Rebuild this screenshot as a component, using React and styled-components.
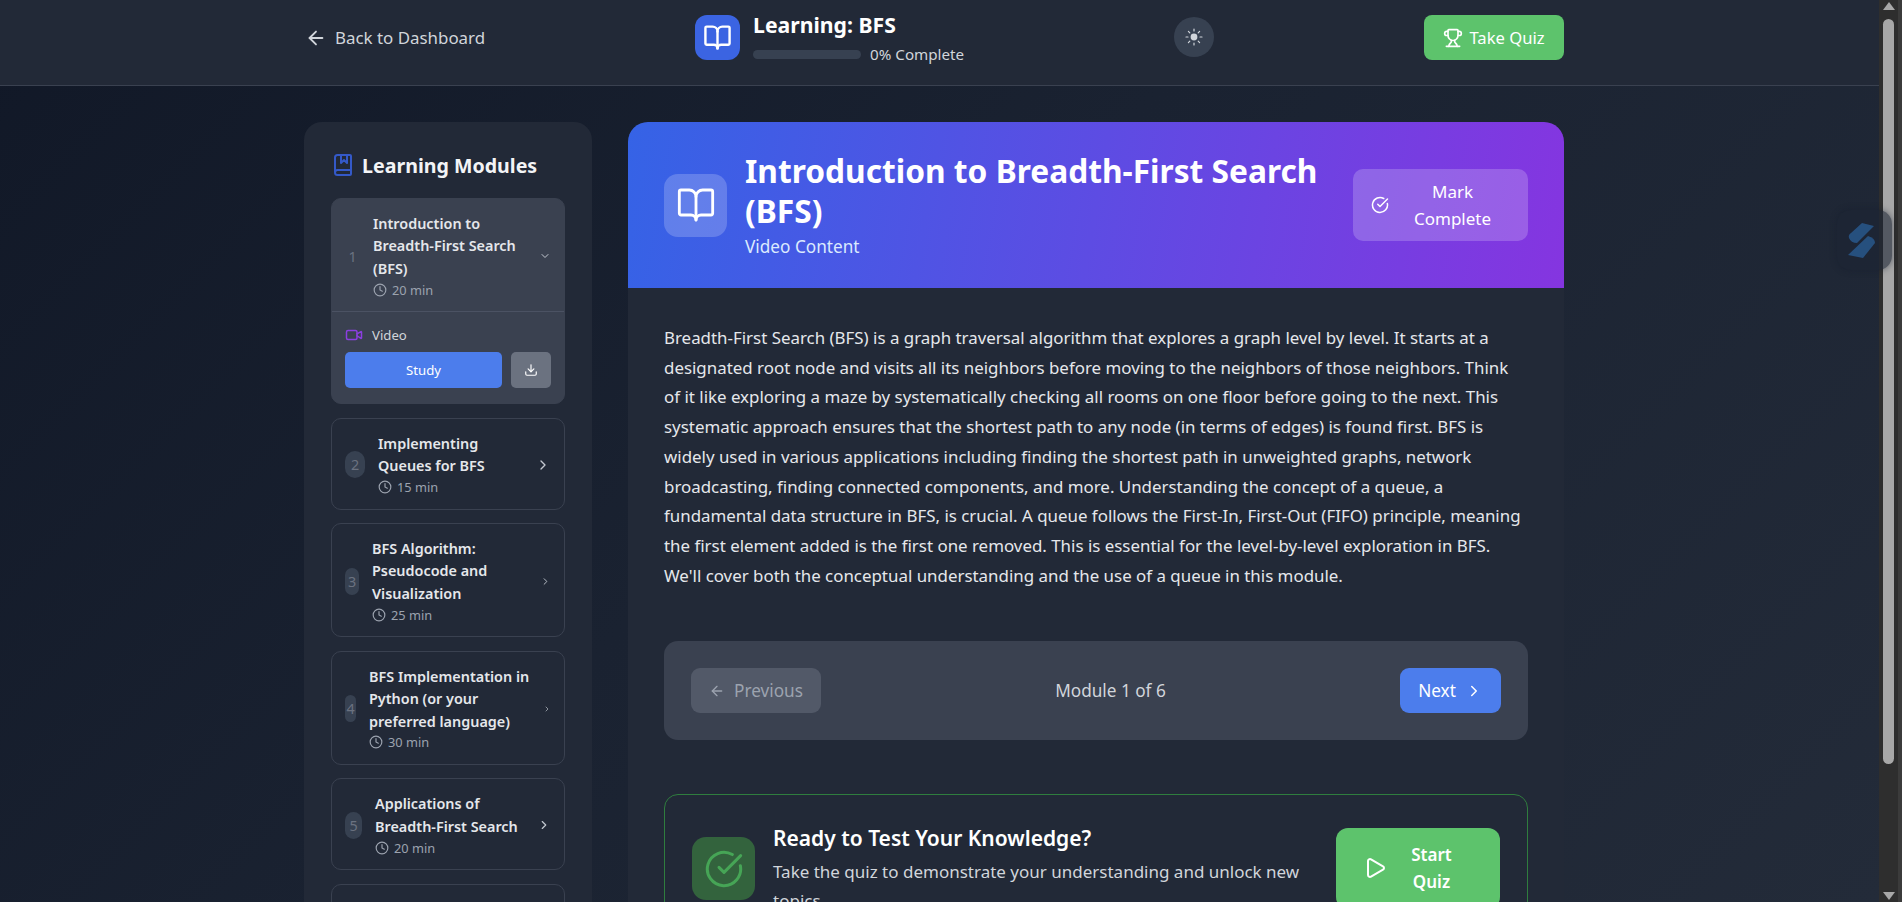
import React from 'react';
import styled, { createGlobalStyle } from 'styled-components';
import {
  ArrowLeft, BookMarked, BookOpen, ChevronDown, ChevronRight, CircleCheckBig,
  Clock, Download, Play, Trophy, Video,
} from 'lucide-react';

const GlobalStyle = createGlobalStyle`
  html, body { margin: 0; padding: 0; height: 100%; overflow: hidden; }
  body { font-family: "Noto Sans", "Open Sans", sans-serif; color: #fff; background: #111827; }
  * { box-sizing: border-box; }
  button { font-family: inherit; border: 0; cursor: pointer; }
`;

const Shell = styled.div`
  position: relative;
  display: flex;
  height: 100vh;
  overflow: hidden;
`;

const Page = styled.div`
  flex: 1;
  min-width: 0;
  overflow: hidden;
  background: linear-gradient(135deg, #111827 0%, #1a2231 45%, #232b39 100%);
`;

const Header = styled.header`
  height: 86px;
  padding: 15px 315px 0 305px;
  background: #222937;
  border-bottom: 1px solid #3a4150;
  display: flex;
  align-items: flex-start;
  justify-content: space-between;
`;

const BackLink = styled.a`
  display: flex;
  align-items: center;
  gap: 8px;
  height: 45px;
  font-size: 16.9px;
  color: #d1d5db;
`;

const Brand = styled.div`
  display: flex;
  gap: 13px;
`;

const BrandTile = styled.div`
  width: 45px;
  height: 45px;
  border-radius: 12px;
  background: #3b64e2;
  display: flex;
  align-items: center;
  justify-content: center;
`;

const BrandTitle = styled.div`
  font-size: 21.2px;
  font-weight: 700;
  line-height: 24px;
  margin-top: -2px;
`;

const ProgressRow = styled.div`
  display: flex;
  align-items: center;
  gap: 9px;
  margin-top: 7px;
  font-size: 15.2px;
  line-height: 20px;
  color: #d1d5db;
`;

const ProgressTrack = styled.div`
  width: 108px;
  height: 9px;
  border-radius: 5px;
  background: #374151;
`;

const ThemeButton = styled.button`
  width: 40px;
  height: 40px;
  margin-top: 2px;
  border-radius: 50%;
  background: #374151;
  display: flex;
  align-items: center;
  justify-content: center;
`;

const QuizButton = styled.button`
  width: 140px;
  height: 45px;
  border-radius: 8px;
  background: #5dc36c;
  color: #fff;
  font-size: 16.6px;
  display: flex;
  align-items: center;
  justify-content: center;
  gap: 6px;
`;

const Layout = styled.main`
  display: grid;
  grid-template-columns: 288px 936px;
  gap: 36px;
  padding: 36px 0 0 304px;
`;

const Sidebar = styled.aside`
  background: #222937;
  border-radius: 18px;
  padding: 26px 27px 27px;
`;

const SidebarTitle = styled.h2`
  display: flex;
  align-items: center;
  gap: 7px;
  margin: 0 0 16px;
  height: 34px;
  font-size: 19.6px;
  font-weight: 700;
  color: #f3f4f6;
`;

const ModuleList = styled.div`
  display: flex;
  flex-direction: column;
  gap: 13.5px;
`;

const ModuleCard = styled.div`
  border-radius: 10px;
  border: 1px solid #3a4150;
  background: ${p => (p.$active ? '#3a4150' : 'transparent')};
`;

const ModuleStub = styled(ModuleCard)`
  height: 92px;
`;

const ModuleHead = styled.div`
  display: flex;
  align-items: center;
  gap: 13px;
  padding: 14px 13px 12px;
`;

const Badge = styled.span`
  flex: none;
  width: ${p => p.$w}px;
  height: 27px;
  border-radius: 10px;
  background: ${p => (p.$active ? 'transparent' : '#374151')};
  color: #6b7280;
  font-size: 14.4px;
  display: flex;
  align-items: center;
  justify-content: center;
`;

const ModuleBody = styled.div`
  flex: 1;
  min-width: 0;
`;

const ModuleTitle = styled.div`
  font-size: 14.4px;
  font-weight: 600;
  line-height: 22.4px;
  color: #e5e7eb;
`;

const ModuleTime = styled.div`
  display: flex;
  align-items: center;
  gap: 5px;
  height: 19px;
  font-size: 12.8px;
  color: #9ca3af;
`;

const ChevronSlot = styled.span`
  flex: none;
  display: flex;
  color: #c3c8d0;
`;

const ModuleFoot = styled.div`
  border-top: 1px solid #4b5263;
  padding: 13px 13px 15px;
`;

const FootLabel = styled.div`
  display: flex;
  align-items: center;
  gap: 9px;
  height: 20px;
  font-size: 13.2px;
  color: #d1d5db;
`;

const FootActions = styled.div`
  display: flex;
  gap: 9px;
  margin-top: 7px;
`;

const StudyButton = styled.button`
  flex: 1;
  height: 36px;
  border-radius: 5px;
  background: #4c7dec;
  color: #fff;
  font-size: 13.2px;
`;

const DownloadButton = styled.button`
  width: 40px;
  height: 36px;
  border-radius: 5px;
  background: #6b7280;
  color: #fff;
  display: flex;
  align-items: center;
  justify-content: center;
`;

const Content = styled.section`
  background: #222937;
  border-radius: 20px 20px 0 0;
  min-height: 900px;
`;

const Hero = styled.div`
  height: 166px;
  border-radius: 20px 20px 0 0;
  padding: 0 36px;
  background: linear-gradient(100deg, #3563e6 0%, #8535e0 100%);
  display: flex;
  align-items: center;
  gap: 18px;
`;

const HeroTile = styled.div`
  flex: none;
  width: 63px;
  height: 63px;
  border-radius: 14px;
  background: rgba(255, 255, 255, 0.2);
  display: flex;
  align-items: center;
  justify-content: center;
`;

const HeroText = styled.div`
  flex: 1;
  min-width: 0;
`;

const HeroTitle = styled.h1`
  margin: 0;
  font-size: 31.7px;
  font-weight: 700;
  line-height: 40px;
`;

const HeroSub = styled.div`
  margin-top: 2px;
  font-size: 17.2px;
  line-height: 27px;
  color: #dbeafe;
`;

const MarkButton = styled.button`
  flex: none;
  width: 175px;
  height: 72px;
  border-radius: 10px;
  background: rgba(255, 255, 255, 0.2);
  color: #fff;
  font-size: 17px;
  line-height: 27px;
  padding: 0 18px;
  display: flex;
  align-items: center;
  gap: 6px;
`;

const ButtonLabel = styled.span`
  flex: 1;
  text-align: center;
`;

const Article = styled.div`
  padding: 35px 36px 0;
`;

const Paragraph = styled.p`
  margin: 0;
  font-size: 16.9px;
  line-height: 29.7px;
  color: #e5e7eb;
`;

const ParagraphLine = styled.span`
  display: block;
  white-space: nowrap;
`;

const Pager = styled.nav`
  margin-top: 51px;
  padding: 27px;
  border-radius: 14px;
  background: #3a4150;
  display: flex;
  align-items: center;
  justify-content: space-between;
`;

const PagerButton = styled.button`
  height: 45px;
  width: ${p => p.$w}px;
  border-radius: 9px;
  background: ${p => (p.$primary ? '#4c7dec' : '#525968')};
  color: ${p => (p.$primary ? '#fff' : '#9ca3af')};
  font-size: 17.2px;
  display: flex;
  align-items: center;
  justify-content: center;
  gap: 9px;
`;

const PagerLabel = styled.div`
  font-size: 17.2px;
  color: #d1d5db;
`;

const QuizPanel = styled.div`
  margin-top: 54px;
  padding: 27px;
  border: 1px solid #2f7d3e;
  border-radius: 14px;
  display: flex;
  align-items: center;
  gap: 18px;
`;

const QuizTile = styled.div`
  flex: none;
  width: 63px;
  height: 63px;
  border-radius: 14px;
  background: #33633d;
  display: flex;
  align-items: center;
  justify-content: center;
`;

const QuizText = styled.div`
  flex: 1;
  min-width: 0;
`;

const QuizTitle = styled.h3`
  margin: 0;
  font-size: 21px;
  font-weight: 600;
  line-height: 33px;
`;

const QuizDesc = styled.p`
  margin: 2px 0 0;
  font-size: 17px;
  line-height: 29px;
  color: #d1d5db;
`;

const StartButton = styled.button`
  flex: none;
  width: 164px;
  height: 81px;
  margin-top: -1px;
  border-radius: 12px;
  background: #5dc36c;
  color: #fff;
  font-size: 17px;
  font-weight: 600;
  line-height: 27px;
  padding: 0 27px;
  display: flex;
  align-items: center;
  gap: 3px;
`;

const Scrollbar = styled.div`
  flex: none;
  width: 23px;
  display: flex;
  flex-direction: column;
  align-items: flex-start;
  padding-left: 4px;
  background: #2e2e2e;
  border-right: 4px solid #3b3b3b;
`;

const ScrollArrow = styled.span`
  width: 0;
  height: 0;
  border-left: 6px solid transparent;
  border-right: 6px solid transparent;
  ${p => (p.$down
    ? 'border-top: 8px solid #a8a8a8; margin-top: auto; margin-bottom: 2px;'
    : 'border-bottom: 8px solid #a8a8a8; margin-top: 2px;')}
`;

const ScrollThumb = styled.div`
  width: 11px;
  height: 745px;
  margin-top: 9px;
  border-radius: 6px;
  background: #a8a8a8;
`;

const FloatingWidget = styled.div`
  position: absolute;
  top: 210px;
  right: 10px;
  width: 55px;
  height: 60px;
  padding-right: 6px;
  border-radius: 14px;
  background: rgba(28, 36, 52, 0.6);
  box-shadow: 0 0 6px rgba(20, 28, 44, 0.5);
  display: flex;
  align-items: center;
  justify-content: center;
`;

const modules = [
  { n: 2, title: 'Implementing Queues for BFS', time: '15 min', badge: 20, chevron: 16 },
  { n: 3, title: 'BFS Algorithm: Pseudocode and Visualization', time: '25 min', badge: 14, chevron: 11 },
  { n: 4, title: 'BFS Implementation in Python (or your preferred language)', time: '30 min', badge: 11, chevron: 8 },
  { n: 5, title: 'Applications of Breadth-First Search', time: '20 min', badge: 17, chevron: 14 },
];

// broken by hand so the lines fall where they do in the design
const intro = [
  'Breadth-First Search (BFS) is a graph traversal algorithm that explores a graph level by level. It starts at a',
  'designated root node and visits all its neighbors before moving to the neighbors of those neighbors. Think',
  'of it like exploring a maze by systematically checking all rooms on one floor before going to the next. This',
  'systematic approach ensures that the shortest path to any node (in terms of edges) is found first. BFS is',
  'widely used in various applications including finding the shortest path in unweighted graphs, network',
  'broadcasting, finding connected components, and more. Understanding the concept of a queue, a',
  'fundamental data structure in BFS, is crucial. A queue follows the First-In, First-Out (FIFO) principle, meaning',
  'the first element added is the first one removed. This is essential for the level-by-level exploration in BFS.',
  "We'll cover both the conceptual understanding and the use of a queue in this module.",
];

const SunIcon = () => (
  <svg width="18" height="18" viewBox="0 0 18 18" fill="#d1d5db" stroke="#d1d5db" strokeWidth="1.2" strokeLinecap="round">
    <circle cx="9" cy="9" r="3.4" stroke="none" />
    <path d="M9 1v2M9 15v2M1 9h2M15 9h2M3.4 3.4l1.4 1.4M13.2 13.2l1.4 1.4M3.4 14.6l1.4-1.4M13.2 4.8l1.4-1.4" />
  </svg>
);

const WidgetLogo = () => (
  <svg width="27" height="35" viewBox="0 0 27 35" fill="#285587" opacity="0.9">
    <path d="M14 0L26 3 9 20Q3 20 1 15Q0 12 3 10Z" />
    <path d="M20 13Q27 15 27 20L15 35 0 32Z" />
  </svg>
);

const ModuleItem = ({ n, title, time, badge, chevron }) => (
  <ModuleCard>
    <ModuleHead>
      <Badge $w={badge}>{n}</Badge>
      <ModuleBody>
        <ModuleTitle>{title}</ModuleTitle>
        <ModuleTime><Clock size={14} />{time}</ModuleTime>
      </ModuleBody>
      <ChevronSlot><ChevronRight size={chevron} /></ChevronSlot>
    </ModuleHead>
  </ModuleCard>
);

export default function App() {
  return (
    <Shell>
      <GlobalStyle />
      <Page>
        <Header>
          <BackLink><ArrowLeft size={22} />Back to Dashboard</BackLink>
          <Brand>
            <BrandTile><BookOpen size={29} color="#fff" /></BrandTile>
            <div>
              <BrandTitle>Learning: BFS</BrandTitle>
              <ProgressRow><ProgressTrack />0% Complete</ProgressRow>
            </div>
          </Brand>
          <ThemeButton aria-label="Toggle theme"><SunIcon /></ThemeButton>
          <QuizButton><Trophy size={20} />Take Quiz</QuizButton>
        </Header>
        <Layout>
          <Sidebar>
            <SidebarTitle><BookMarked size={24} color="#3459c8" />Learning Modules</SidebarTitle>
            <ModuleList>
              <ModuleCard $active>
                <ModuleHead>
                  <Badge $active $w={15}>1</Badge>
                  <ModuleBody>
                    <ModuleTitle>Introduction to Breadth-First Search (BFS)</ModuleTitle>
                    <ModuleTime><Clock size={14} />20 min</ModuleTime>
                  </ModuleBody>
                  <ChevronSlot><ChevronDown size={12} /></ChevronSlot>
                </ModuleHead>
                <ModuleFoot>
                  <FootLabel><Video size={18} color="#8b3fe0" />Video</FootLabel>
                  <FootActions>
                    <StudyButton>Study</StudyButton>
                    <DownloadButton aria-label="Download"><Download size={14} /></DownloadButton>
                  </FootActions>
                </ModuleFoot>
              </ModuleCard>
              {modules.map(m => <ModuleItem key={m.n} {...m} />)}
              <ModuleStub />
            </ModuleList>
          </Sidebar>
          <Content>
            <Hero>
              <HeroTile><BookOpen size={40} color="#fff" strokeWidth={1.7} /></HeroTile>
              <HeroText>
                <HeroTitle>Introduction to Breadth-First Search (BFS)</HeroTitle>
                <HeroSub>Video Content</HeroSub>
              </HeroText>
              <MarkButton>
                <CircleCheckBig size={18} style={{ flex: 'none' }} />
                <ButtonLabel>Mark<br />Complete</ButtonLabel>
              </MarkButton>
            </Hero>
            <Article>
              <Paragraph>
                {intro.map(line => <ParagraphLine key={line}>{line}</ParagraphLine>)}
              </Paragraph>
              <Pager>
                <PagerButton $w={130}><ArrowLeft size={16} />Previous</PagerButton>
                <PagerLabel>Module 1 of 6</PagerLabel>
                <PagerButton $primary $w={101}>Next<ChevronRight size={18} /></PagerButton>
              </Pager>
              <QuizPanel>
                <QuizTile><CircleCheckBig size={40} color="#46a556" strokeWidth={1.8} /></QuizTile>
                <QuizText>
                  <QuizTitle>Ready to Test Your Knowledge?</QuizTitle>
                  <QuizDesc>Take the quiz to demonstrate your understanding and unlock new topics</QuizDesc>
                </QuizText>
                <StartButton>
                  <Play size={24} style={{ flex: 'none' }} />
                  <ButtonLabel>Start<br />Quiz</ButtonLabel>
                </StartButton>
              </QuizPanel>
            </Article>
          </Content>
        </Layout>
      </Page>
      <Scrollbar>
        <ScrollArrow />
        <ScrollThumb />
        <ScrollArrow $down />
      </Scrollbar>
      <FloatingWidget><WidgetLogo /></FloatingWidget>
    </Shell>
  );
}
